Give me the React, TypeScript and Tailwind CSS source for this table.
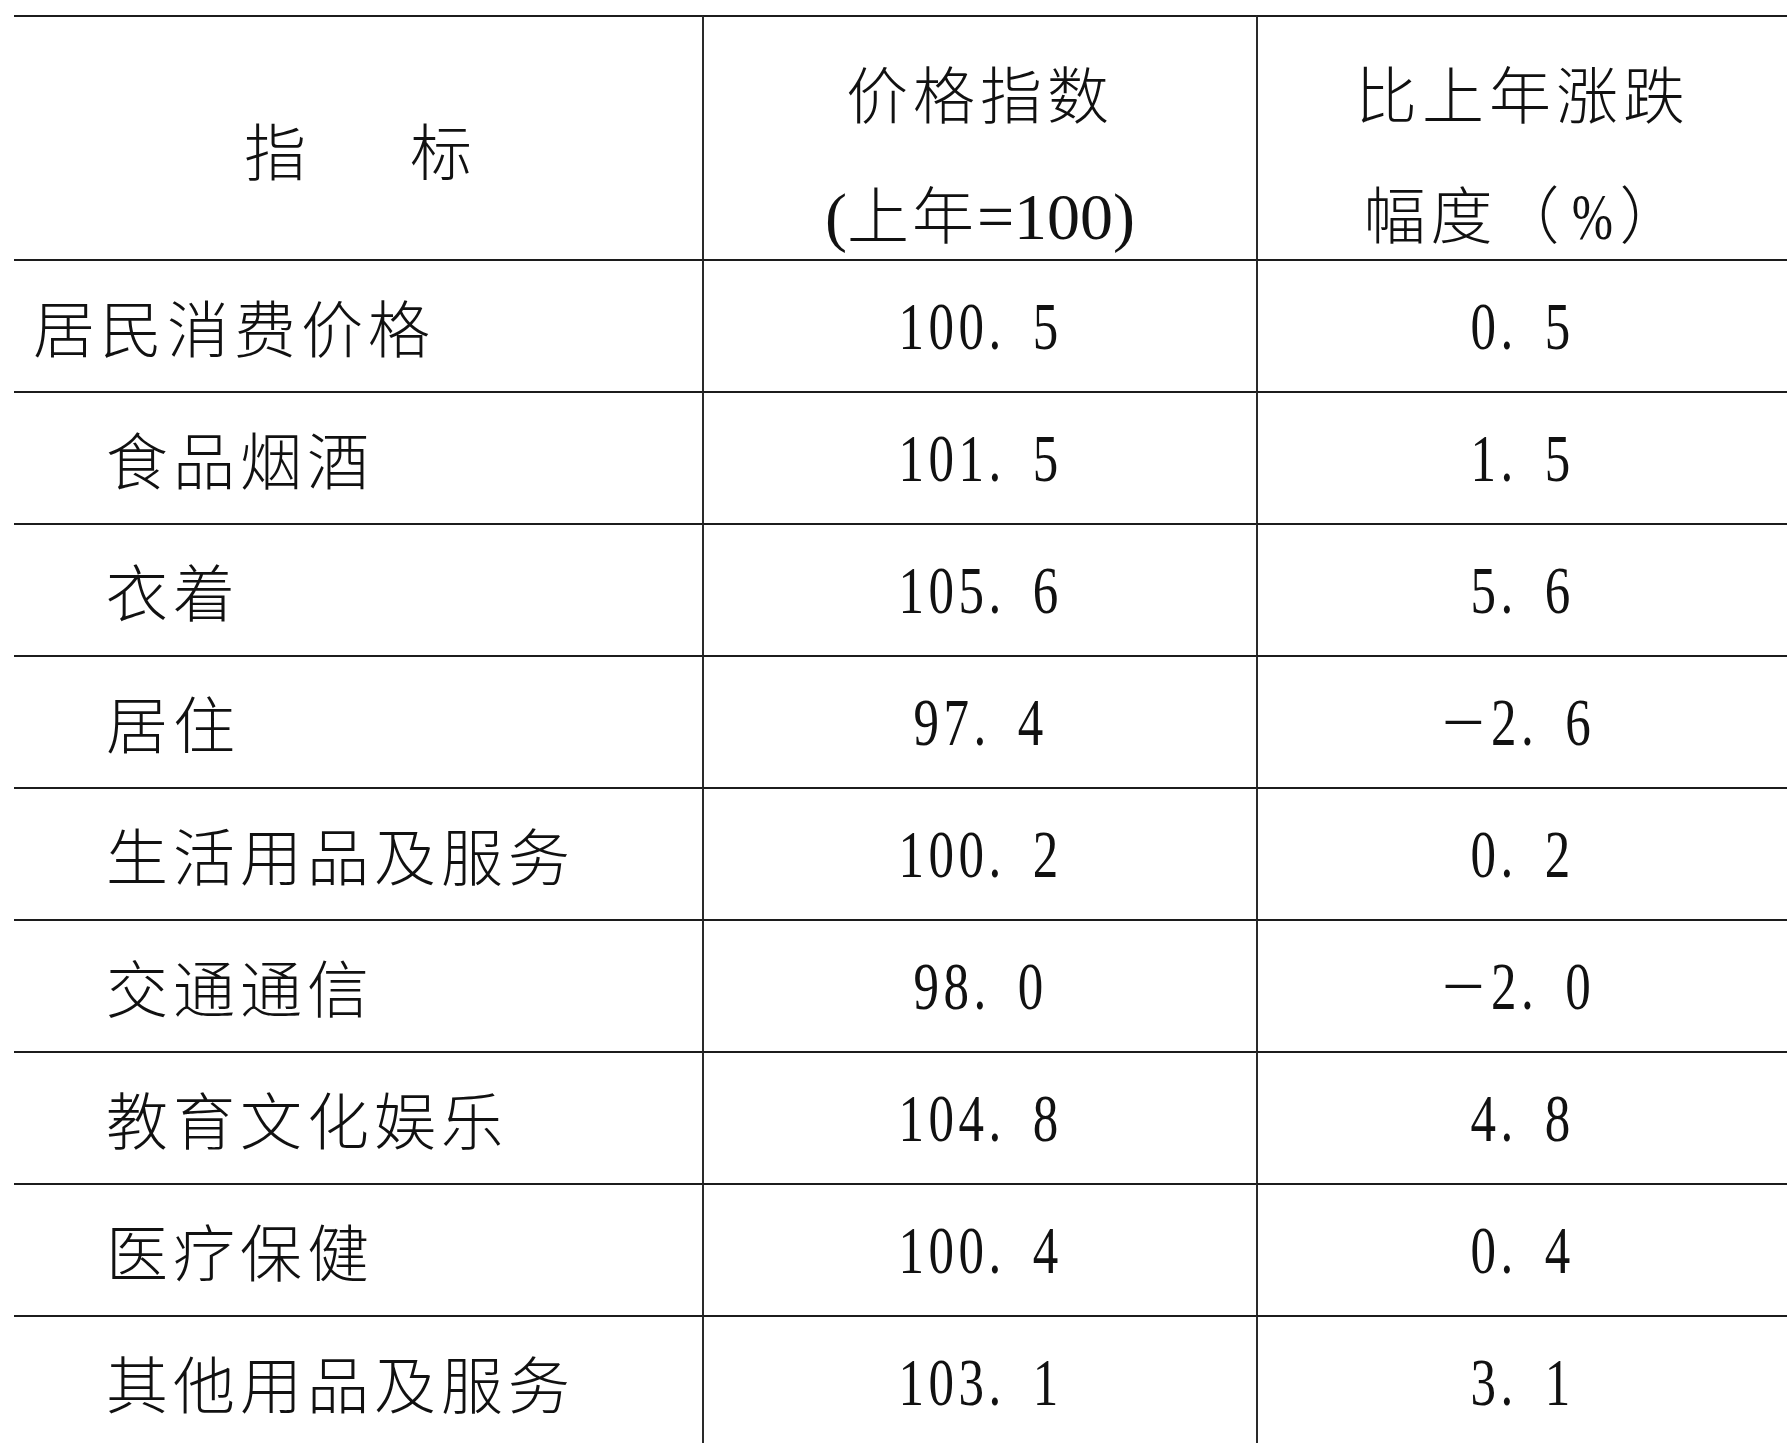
import React from "react";

const cjk = "font-['Noto_Sans_CJK_SC','Noto_Sans_CJK_JP',sans-serif] font-light";
const serif = "font-['Liberation_Serif','Noto_Sans_CJK_SC',serif]";

type Row = { name: string; index: string; change: string; indent: boolean };

const rows: Row[] = [
  { name: "居民消费价格", index: "100.5", change: "0.5", indent: false },
  { name: "食品烟酒", index: "101.5", change: "1.5", indent: true },
  { name: "衣着", index: "105.6", change: "5.6", indent: true },
  { name: "居住", index: "97.4", change: "−2.6", indent: true },
  { name: "生活用品及服务", index: "100.2", change: "0.2", indent: true },
  { name: "交通通信", index: "98.0", change: "−2.0", indent: true },
  { name: "教育文化娱乐", index: "104.8", change: "4.8", indent: true },
  { name: "医疗保健", index: "100.4", change: "0.4", indent: true },
  { name: "其他用品及服务", index: "103.1", change: "3.1", indent: true },
];

function Num({ value }: { value: string }) {
  const neg = value.startsWith("−");
  const [a, b] = (neg ? value.slice(1) : value).split(".");
  return (
    <span
      className={`${serif} inline-block scale-x-75 text-[68px] leading-none tracking-[6px] text-[#111]`}
    >
      {neg && <span className="inline-block scale-x-150 mr-[10px]">−</span>}
      {a}.<span className="ml-[36px]">{b}</span>
    </span>
  );
}

const line = "border-t-2 border-[#1c1c1c]";
const vline = "border-l-2 border-l-[#2a2a2a]";

export default function App() {
  return (
    <div className="h-[1443px] w-[1790px] overflow-hidden bg-white pt-[15px] pl-[14px]">
      <div className="grid grid-cols-[688px_554px_531px]">
        {/* header */}
        <div className={`${line} h-[244px] flex justify-center pt-[101px]`}>
          <div className={`${cjk} flex gap-[104px] text-[62px] leading-none text-[#111]`}>
            <span>指</span>
            <span>标</span>
          </div>
        </div>
        <div className={`${line} ${vline} h-[244px] flex flex-col items-center pt-[15px] text-[#111]`}>
          <div className={`${cjk} text-[62px] leading-[120px] tracking-[5px]`}>价格指数</div>
          <div className="leading-[120px] whitespace-nowrap">
            <span className={`${serif} text-[66px]`}>(</span>
            <span className={`${cjk} text-[62px] tracking-[3px]`}>上年</span>
            <span className={`${serif} text-[66px]`}>=100)</span>
          </div>
        </div>
        <div className={`${line} ${vline} h-[244px] flex flex-col items-center pt-[15px] text-[#111]`}>
          <div className={`${cjk} text-[62px] leading-[120px] tracking-[5px]`}>比上年涨跌</div>
          <div className="leading-[120px] whitespace-nowrap">
            <span className={`${cjk} text-[62px] tracking-[5px]`}>幅度（</span>
            <span className={`${serif} inline-block scale-x-75 text-[66px]`}>%</span>
            <span className={`${cjk} text-[62px]`}>）</span>
          </div>
        </div>

        {rows.map((r) => (
          <React.Fragment key={r.name}>
            <div
              className={`${line} h-[132px] flex items-center ${r.indent ? "pl-[92px]" : "pl-[19px]"}`}
            >
              <span className={`${cjk} text-[62px] leading-none tracking-[5px] text-[#111]`}>
                {r.name}
              </span>
            </div>
            <div className={`${line} ${vline} h-[132px] flex items-center justify-center`}>
              <Num value={r.index} />
            </div>
            <div className={`${line} ${vline} h-[132px] flex items-center justify-center`}>
              <Num value={r.change} />
            </div>
          </React.Fragment>
        ))}
      </div>
    </div>
  );
}
